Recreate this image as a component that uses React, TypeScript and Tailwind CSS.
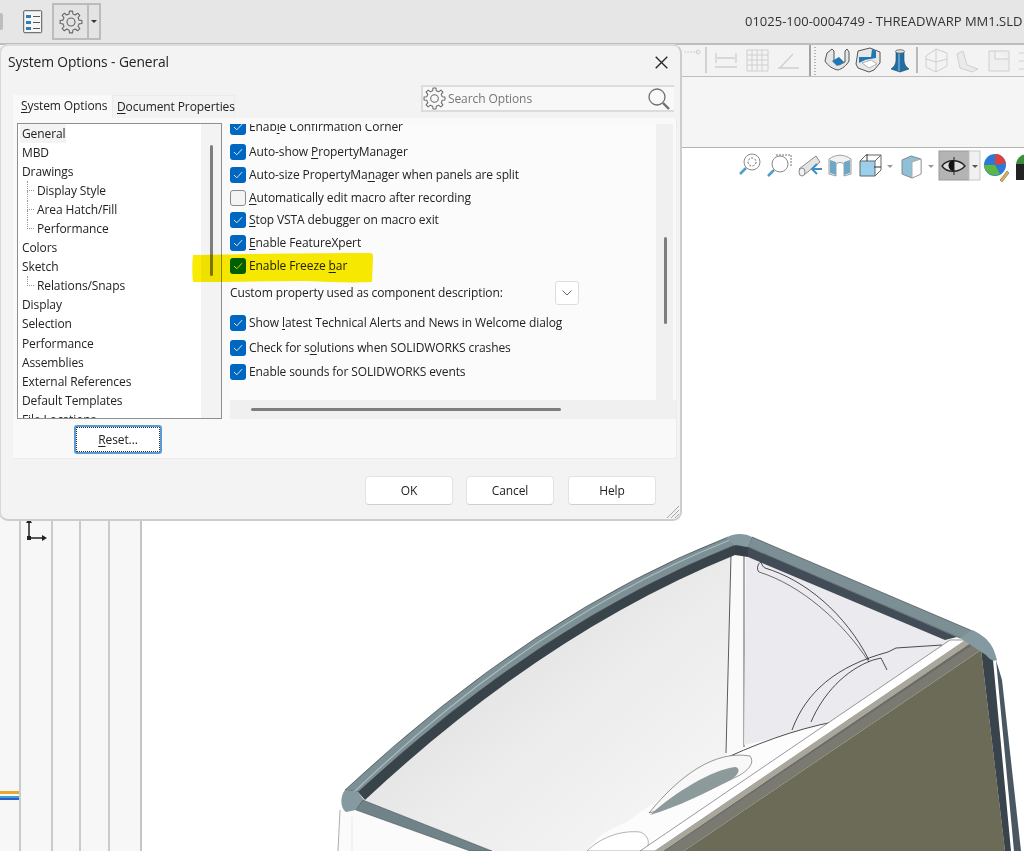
import type { ReactNode } from "react";

// gear outline shared by the toolbar button and the search box
function gearPath(cx: number, cy: number, outer: number, inner: number, teeth: number) {
  const pts: string[] = [];
  const step = (Math.PI * 2) / teeth;
  for (let i = 0; i < teeth; i++) {
    const a = i * step - Math.PI / 2;
    const p = [
      [inner, a - step * 0.5],
      [inner, a - step * 0.3],
      [outer, a - step * 0.18],
      [outer, a + step * 0.18],
      [inner, a + step * 0.3],
    ];
    p.forEach(([r, t]) => pts.push(`${(cx + r * Math.cos(t)).toFixed(2)} ${(cy + r * Math.sin(t)).toFixed(2)}`));
  }
  return `M${pts.join("L")}Z`;
}

function Gear({ size, color = "#6b6b6b" }: { size: number; color?: string }) {
  return (
    <svg width={size} height={size} viewBox="0 0 24 24" fill="none" stroke={color} strokeWidth="1.1" strokeLinejoin="round">
      <path d={gearPath(12, 12, 11, 8.2, 8)} />
      <circle cx="12" cy="12" r="4" />
    </svg>
  );
}

function U({ children }: { children: ReactNode }) {
  return <span className="underline underline-offset-2 decoration-1">{children}</span>;
}

function Check({ on = true }: { on?: boolean }) {
  if (!on) return <span className="w-4 h-4 shrink-0 rounded-[3px] border border-[#8a8a8a] bg-[#f4f4f4]" />;
  return (
    <span className="w-4 h-4 shrink-0 rounded-[3px] bg-[#0067c0] flex items-center justify-center">
      <svg width="10" height="8" viewBox="0 0 10 8" fill="none" stroke="#dbe9f6" strokeWidth="1">
        <path d="M1 4l2.8 2.8L9 1.2" />
      </svg>
    </span>
  );
}

function Opt({ className, on, children }: { className: string; on?: boolean; children: ReactNode }) {
  return (
    <div className={`flex items-center gap-[3px] h-4 whitespace-nowrap ${className}`}>
      <Check on={on} />
      <span>{children}</span>
    </div>
  );
}

function TreeItem({ label, child, last, selected }: { label: string; child?: boolean; last?: boolean; selected?: boolean }) {
  if (selected) return <div className="h-[19.06px] leading-[19px] ml-[2px] pl-[2px] w-[46px] bg-[#f3f3f3]">{label}</div>;
  if (!child) return <div className="h-[19.06px] leading-[19px] pl-[4px]">{label}</div>;
  return (
    <div className="relative h-[19.06px] leading-[19px] pl-[19px]">
      <span className="absolute left-[9px] top-0 w-[7px] h-[10px] border-l border-b border-dotted border-[#9a9a9a]" />
      {!last && <span className="absolute left-[9px] top-[10px] h-[10px] border-l border-dotted border-[#9a9a9a]" />}
      {label}
    </div>
  );
}

function DlgButton({ children, className }: { children: ReactNode; className?: string }) {
  return (
    <button className={`w-[88px] h-[29px] rounded-[4px] bg-white border border-[#e3e3e3] border-b-[#cfcfcf] text-[#222] ${className ?? ""}`}>
      {children}
    </button>
  );
}

function SystemOptions() {
  return (
    <div className="absolute left-[-1px] top-[44px] w-[683px] h-[477px] rounded-[9px] bg-[#f3f3f3] border-2 border-[#cdcdcd] border-l-[#d8d8d8] border-t-[#dcdcdc] flex flex-col text-[#222] text-[12px] tracking-[-0.1px]">
      <div className="flex items-center justify-between h-[33px] pl-[7px] pr-[12px] shrink-0">
        <span className="text-[13.8px]">System Options - General</span>
        <svg width="13" height="13" viewBox="0 0 13 13" stroke="#222" strokeWidth="1.3">
          <path d="M.7.7l11.6 11.6M12.3.7L.7 12.3" />
        </svg>
      </div>
      <div className="flex items-end justify-between h-[39px] pl-[12px] pr-[6px] shrink-0">
        <div className="flex whitespace-nowrap">
          <div className="h-[23px] w-[99px] bg-[#f9f9f9] pl-[8px] leading-[21px]"><U>S</U>ystem Options</div>
          <div className="h-[22px] w-[123px] border border-b-0 border-[#ececec] pl-[4px] leading-[22px]"><U>D</U>ocument Properties</div>
        </div>
        <div className="w-[253px] h-[27px] mb-[6px] bg-[#f8f8f8] border-2 border-[#dcdcdc] border-r-0 flex items-center text-[#767676]">
          <Gear size={23} />
          <span className="ml-[2px] flex-1">Search Options</span>
          <svg width="24" height="24" viewBox="0 0 24 24" fill="none" stroke="#6f6f6f" className="mr-[3px]">
            <circle cx="10" cy="10" r="8" strokeWidth="1.3" />
            <path d="M16 16l6 6" strokeWidth="2.4" />
          </svg>
        </div>
      </div>
      <div className="ml-[12px] mr-[3px] h-[341px] bg-[#f9f9f9] border-b border-r border-[#ececec] shrink-0">
        <div className="flex gap-[8px] pt-[6px] pl-[4px] h-[301px]">
          <div className="w-[205px] h-[296px] -mt-[1px] bg-white border border-[#8f8f8f] flex overflow-hidden shrink-0">
            <div className="flex-1 overflow-hidden leading-none">
              <TreeItem label="General" selected />
              <TreeItem label="MBD" />
              <TreeItem label="Drawings" />
              <TreeItem label="Display Style" child />
              <TreeItem label="Area Hatch/Fill" child />
              <TreeItem label="Performance" child last />
              <TreeItem label="Colors" />
              <TreeItem label="Sketch" />
              <TreeItem label="Relations/Snaps" child last />
              <TreeItem label="Display" />
              <TreeItem label="Selection" />
              <TreeItem label="Performance" />
              <TreeItem label="Assemblies" />
              <TreeItem label="External References" />
              <TreeItem label="Default Templates" />
              <TreeItem label="File Locations" />
            </div>
            <div className="w-[20px] bg-[#f3f3f3] shrink-0 pt-[21px] flex justify-center">
              <div className="w-[3px] h-[131px] rounded-full bg-[#7d7d7d] ml-[1px]" />
            </div>
          </div>
          <div className="flex-1 mr-[3px] flex flex-col">
            <div className="flex h-[276px]">
              <div className="flex-1 bg-[#fbfbfb] overflow-hidden">
                <Opt className="mt-[-5px]">Enab<U>l</U>e Confirmation Corner</Opt>
                <Opt className="mt-[9px]">Auto-show <U>P</U>ropertyManager</Opt>
                <Opt className="mt-[7px]">Auto-size PropertyMa<U>n</U>ager when panels are split</Opt>
                <Opt className="mt-[7px]" on={false}><U>A</U>utomatically edit macro after recording</Opt>
                <Opt className="mt-[6px]"><U>S</U>top VSTA debugger on macro exit</Opt>
                <Opt className="mt-[7px]"><U>E</U>nable FeatureXpert</Opt>
                <Opt className="mt-[7px]">Enable Freeze <U>b</U>ar</Opt>
                <div className="flex items-center mt-[7px] h-6 whitespace-nowrap">
                  <span>Custom property used as component description:</span>
                  <span className="ml-[52px] w-6 h-6 rounded-[3px] bg-white border border-[#dedede] flex items-center justify-center">
                    <svg width="10" height="6" viewBox="0 0 10 6" fill="none" stroke="#666"><path d="M.5.5L5 5 9.500.5" /></svg>
                  </span>
                </div>
                <Opt className="mt-[10px]">Show <U>l</U>atest Technical Alerts and News in Welcome dialog</Opt>
                <Opt className="mt-[9px]">Check for s<U>o</U>lutions when SOLIDWORKS crashes</Opt>
                <Opt className="mt-[8px]">Enable sounds for SOLIDWORKS events</Opt>
              </div>
              <div className="w-[17px] bg-[#f0f0f0] shrink-0 pt-[113px] pl-[8px]">
                <div className="w-[3px] h-[87px] rounded-full bg-[#7d7d7d]" />
              </div>
            </div>
            <div className="h-[19px] bg-[#f0f0f0] pt-[8px] pl-[21px] -mr-[3px]">
              <div className="w-[310px] h-[3px] rounded-full bg-[#7d7d7d]" />
            </div>
          </div>
        </div>
        <div className="ml-[61px] mt-[6px] w-[88px] h-[29px] rounded-[3px] border-2 border-[#5b9bd5] bg-white flex items-center justify-center outline-1 outline-dotted -outline-offset-3 outline-[#333]">
          <span><U>R</U>eset...</span>
        </div>
      </div>
      <div className="flex justify-end gap-[13px] pr-[24px] pt-[17px]">
        <DlgButton>OK</DlgButton>
        <DlgButton className="mr-[1px]">Cancel</DlgButton>
        <DlgButton>Help</DlgButton>
      </div>
      <svg className="absolute right-0 bottom-0" width="14" height="14" viewBox="0 0 14 14" stroke="#a5a5a5" strokeWidth="1">
        <path d="M1 13L13 1M5 13l8-8M9 13l4-4" />
      </svg>
      {/* marker pen over the Freeze bar row */}
      <svg className="absolute left-[190px] top-[207px] mix-blend-multiply pointer-events-none" width="184" height="31" viewBox="0 0 184 31">
        <path d="M2 2C50 1 130 0 179 0c3 0 3 2 3 5l-1 24c-22 1-44 0-66-1-38 0-76 1-113 1C1 21 1 12 2 2z" fill="#faec00" />
      </svg>
    </div>
  );
}

function Model() {
  return (
    <svg className="absolute left-[-142px] top-[-148px] pointer-events-none" width="1024" height="851" viewBox="0 0 1024 851" fill="none">
      <defs>
        <linearGradient id="wall" x1="0" y1="0" x2="1" y2="1">
          <stop offset="0" stopColor="#d6d6d6" />
          <stop offset="0.55" stopColor="#ececec" />
          <stop offset="1" stopColor="#f8f8f8" />
        </linearGradient>
      </defs>
      <path d="M340 810L365 800 730 550 748 550 975 640 652 851 338 851Z" fill="#fbfbfb" />
      <path d="M365 800Q545 632 733 555L727 757 640 812 588 851 492 851Z" fill="url(#wall)" />
      <path d="M731 555L744 555 744 747 726 756Z" fill="#fafafa" />
      <path d="M731 555L726 753M744 555V747" stroke="#333" strokeWidth=".8" />
      <path d="M746 556L950 640 850 720 744 745Z" fill="#ebebef" />
      <path d="M759 572c-3-3-1-9 2-10 1 3 2 5 4 6 40 12 80 45 104 92" stroke="#222" strokeWidth=".8" />
      <path d="M759 572c42 13 84 50 110 90" stroke="#333" strokeWidth=".7" />
      <path d="M792 730c14-38 44-64 96-78l8-4 46-3M811 722c12-28 34-52 62-62l8-2 6 12" stroke="#222" strokeWidth=".8" />
      <path d="M587 851C600 830 625 822 644 817L728 757C770 738 810 725 850 719L885 700 740 851Z" fill="#fcfcfc" />
      <path d="M728 757C770 738 810 725 850 719" stroke="#222" strokeWidth=".8" />
      <path d="M649 813C680 775 715 750 750 756 756 764 745 772 740 775 710 790 680 805 649 813Z" fill="#f8f8f8" stroke="#555" strokeWidth=".6" />
      <path d="M650 815C675 792 712 770 735 767 742 768 738 776 730 780 705 793 680 806 650 815Z" fill="#8c9a9c" />
      <path d="M587 851C600 838 620 830 640 832 650 836 650 845 645 851Z" fill="#fff" stroke="#666" strokeWidth=".5" />
      <path d="M950 640L966 640 655 851 640 851Z" fill="#fff" stroke="#555" strokeWidth=".6" />
      <path d="M966 640L972 642 663 851 655 851Z" fill="#a9a69a" />
      <path d="M972 642L981 648 670 851 663 851Z" fill="#6e6a6a" />
      <path d="M981 650L1005 851 684 851Z" fill="#6c6b57" />
      <path d="M981 650L974 644 665 851 684 851Z" fill="#7b7a70" />
      <path d="M993 660L1011 851 1005 851 981 650Z" fill="#39434c" />
      <path d="M996 660L1014 851 1021 851 1002 680Z" fill="#4a5660" />
      {/* rim: grey outer band, dark inner band */}
      <path d="M345 790Q536 612 728 537L735 545Q542 622 358 792Z" fill="#7d9096" stroke="#2a2a2a" strokeWidth=".5" />
      <path d="M358 792Q542 622 735 545L735 555Q545 632 365 800Z" fill="#39434a" />
      <path d="M354 792Q538 616 730 540" stroke="#a9bcc2" strokeWidth="1.2" />
      <path d="M752 537L975 632 960 638 748 547Z" fill="#7c8f95" stroke="#2a2a2a" strokeWidth=".5" />
      <path d="M748 547L957 637 945 640 748 557Z" fill="#414c56" />
      <path d="M726 538C733 533 745 533 752 537L748 547 735 546Z" fill="#8499a0" />
      <path d="M735 545L748 547 748 557 735 555Z" fill="#36414a" />
      <path d="M972 630C990 638 994 648 997 660 994 662 990 660 986 655L960 638Z" fill="#8599a0" />
      <path d="M345 790C340 796 340 808 346 812L356 810 364 800 358 792Z" fill="#8499a0" />
      <path d="M363 800L492 851 470 851 356 810Z" fill="#6f8389" stroke="#333" strokeWidth=".4" />
      <path d="M340 810L338 851" stroke="#777" strokeWidth=".6" />
      <path d="M352 817V851" stroke="#ddd" strokeWidth=".6" />
    </svg>
  );
}

function TopToolbar() {
  const faded = "#cfcfcf";
  return (
    <div className="h-[34px] bg-[#f3f3f3] border-t-2 border-b border-[#bdbdbd] flex items-center justify-end overflow-hidden shrink-0">
      <svg width="344" height="32" viewBox="680 44 344 32" fill="none">
        <path d="M684 51h14" stroke={faded} strokeDasharray="2 1" />
        <circle cx="698" cy="51" r="2" stroke={faded} />
        <path d="M706 46v26" stroke="#c0c0c0" strokeWidth="1.300" />
        <path d="M716 52v10M736 52v10M717 57h18M715 66h22" stroke={faded} strokeWidth="1.300" />
        <path d="M747 49h21v21h-21zM752 49v21M757 49v21M762 49v21M747 54h21M747 59h21M747 64h21" stroke={faded} />
        <path d="M778 67h21M780 67l13-14" stroke={faded} strokeWidth="1.300" />
        <path d="M810 44v32" stroke="#777" strokeWidth="1.300" />
        <path d="M815 46v28" stroke="#777" strokeDasharray="1 2" />
        <path d="M827 52l5-4 2 2v11l5 3 6-3V50l2-2 2 3v9c-2 4-7 8-11 9-5-1-10-4-13-9z" fill="#e6e6e6" stroke="#555" />
        <path d="M832 60l7-4 5 5-7 4z" fill="#1f78b4" />
        <path d="M858 50l12-3 10 4v11l-6 7-5 2-11-4-2-4z" fill="#e8e8e8" stroke="#555" />
        <path d="M859 56h12l1-8 4 2v7l-6 1-5 1-6 3z" fill="#1f78b4" />
        <path d="M862 62l9-3 6 4-8 4z" fill="#fff" stroke="#888" strokeWidth=".6" />
        <path d="M896 51v8c0 4-2 7-5 9l9 3 9-3c-3-2-5-5-5-9v-8z" fill="#1f6ea6" stroke="#2a4a60" strokeWidth=".6" />
        <path d="M899 52v18" stroke="#9fc6de" />
        <ellipse cx="900" cy="50.500" rx="4.500" ry="1.800" fill="#ddd" stroke="#333" strokeWidth=".6" />
        <path d="M917 46v26" stroke="#999" strokeWidth="1.300" />
        <path d="M926 55l10-7 11 4v13l-11 6-10-5zM936 48v23M926 58l10 3 11-3" stroke={faded} />
        <path d="M957 53l6-3 4 14 11 4-6 3-12-4z" stroke={faded} fill="#eaeaea" />
        <path d="M989 50h20v20h-20zM995 50v8h14" stroke={faded} fill="#efefef" />
        <path d="M1019 52h5M1019 60h5M1019 68h5" stroke={faded} />
      </svg>
    </div>
  );
}

function ViewToolbar() {
  return (
    <svg width="290" height="32" viewBox="734 151 290 32" fill="none" className="absolute right-0 top-[2px]">
      <circle cx="752" cy="163" r="8" fill="#fff" stroke="#8a8a8a" />
      <circle cx="752" cy="163" r="4" stroke="#666" strokeDasharray="2 1.500" />
      <path d="M746 169l-6 6" stroke="#4f9cc5" strokeWidth="2.500" />
      <circle cx="780" cy="165" r="8" fill="#fff" stroke="#8a8a8a" />
      <path d="M776 156h15v12" stroke="#777" strokeDasharray="2 1" />
      <path d="M774 171l-6 6" stroke="#4f9cc5" strokeWidth="2.500" />
      <path d="M799 170l17-13 4 6-16 13z" fill="#e4e4e4" stroke="#8a8a8a" />
      <ellipse cx="802" cy="173" rx="3" ry="4" fill="#f2f2f2" stroke="#8a8a8a" />
      <path d="M822 170h-9M817 165l-5 5 5 5" stroke="#3f8fc0" strokeWidth="2" />
      <path d="M829 160c7-5 15-5 22 0v15l-7 2v-12c-2-2-6-2-8 0v12l-7-2z" fill="#f2f2f2" stroke="#777" strokeWidth=".7" />
      <path d="M830 161l6 2v13l-6-2zM844 163l6-2v13l-6 2z" fill="#6fa8c6" />
      <path d="M860 162h15v15h-15z" fill="#9cd0ea" stroke="#666" />
      <path d="M860 162l6-6h15v15l-6 6M875 162l6-6" stroke="#666" />
      <path d="M867 155v7M881 168h-7" stroke="#333" />
      <path d="M887 166h6l-3 3z" fill="#999" />
      <path d="M902 161l9-4 10 3v15l-9 4-10-4z" fill="#8fc0da" stroke="#888" />
      <path d="M912 163l9-3v15l-9 4z" fill="#fff" stroke="#aaa" />
      <path d="M928 166h6l-3 3z" fill="#999" />
      <rect x="939" y="152" width="30" height="29" fill="#b4b4b4" stroke="#9a9a9a" />
      <rect x="969" y="152" width="11" height="29" fill="#f0f0f0" stroke="#c8c8c8" />
      <path d="M942 167c5-7 17-7 23 0-6 7-18 7-23 0z" fill="#ddd" stroke="#222" strokeWidth="1.300" />
      <path d="M954 161a5 5 0 0 0 0 11z" fill="#111" />
      <path d="M954 158v18" stroke="#222" />
      <path d="M972 166h6l-3 3z" fill="#555" />
      <circle cx="995" cy="166" r="11" fill="#2b7bd6" />
      <path d="M995 155a11 11 0 0 1 11 9l-11 2z" fill="#d8433f" />
      <path d="M984 166l11 0 5 9a11 11 0 0 1-16-9z" fill="#5cb83f" />
      <path d="M1000 181l7-9 2 2-7 9z" fill="#e0b050" stroke="#555" strokeWidth=".5" />
      <circle cx="1027" cy="166" r="11" fill="#3b8f3b" />
      <path d="M1016 165h8v16h-8z" fill="#222" />
    </svg>
  );
}

export default function App() {
  const line = "border-r-2 border-[#cbcbcb]";
  return (
    <div className="relative w-[1024px] h-[851px] overflow-hidden bg-white flex flex-col font-['Open_Sans',sans-serif]">
      <div className="h-[43px] bg-[#e6e6e6] flex items-center justify-between shrink-0 relative">
        <div className="flex items-center">
          <div className="w-[3px] h-[17px] bg-[#bdbdbd] rounded-r-[2px] mr-[20px]" />
          <svg width="20" height="24" viewBox="0 0 20 24" className="mr-[9px]" fill="none">
            <rect x=".7" y=".7" width="18" height="22" rx="1" fill="#f5f5f5" stroke="#555" />
            <path d="M3 5h5v3H3zM3 11h5v3H3zM3 17h5v3H3z" fill="#2f7fb0" />
            <path d="M10 6.500h7M10 12.500h7M10 18.500h7" stroke="#555" />
          </svg>
          <div className="w-[49px] h-[37px] border-2 border-[#bcbcbc] bg-[#e3e3e3] flex">
            <div className="w-[33px] flex items-center justify-center"><Gear size={24} color="#666" /></div>
            <div className="flex-1 border-l-2 border-[#bcbcbc] flex items-center justify-center">
              <span className="w-0 h-0 border-l-[3px] border-r-[3px] border-t-[3px] border-l-transparent border-r-transparent border-t-[#333]" />
            </div>
          </div>
        </div>
        <span className="text-[13px] text-[#333] whitespace-nowrap absolute left-[745px]">01025-100-0004749 - THREADWARP MM1.SLD</span>
      </div>
      <TopToolbar />
      <div className="h-[71px] bg-[#f5f5f5] border-b border-[#b5b5b5] shrink-0" />
      <div className="flex-1 flex relative">
        <div className="w-[142px] flex bg-[#f7f7f7] shrink-0 border-r-2 border-[#c5c5c5]">
          <div className={`w-[21px] ${line} flex flex-col`}>
            <div className="mt-[643px] h-[3px] bg-[#e5a92f]" />
            <div className="h-[2px]" />
            <div className="h-[2px] bg-[#3ea0d8]" />
            <div className="h-[2px] bg-[#2c5ec4]" />
          </div>
          <div className={`w-[32px] ${line} pt-[370px] pl-[3px]`}>
            <svg width="23" height="24" viewBox="0 0 23 24">
              <path d="M5 22V4M5 20h15" stroke="#222" strokeWidth="1.500" />
              <path d="M5 0l3 5H2zM23 20l-5-3v6z" fill="#222" />
              <rect x="3" y="18" width="4" height="4" fill="#222" />
            </svg>
          </div>
          <div className={`w-[28px] ${line}`} />
          <div className={`w-[29px] ${line}`} />
        </div>
        <div className="flex-1 relative">
          <ViewToolbar />
          <Model />
        </div>
      </div>
      <SystemOptions />
    </div>
  );
}
